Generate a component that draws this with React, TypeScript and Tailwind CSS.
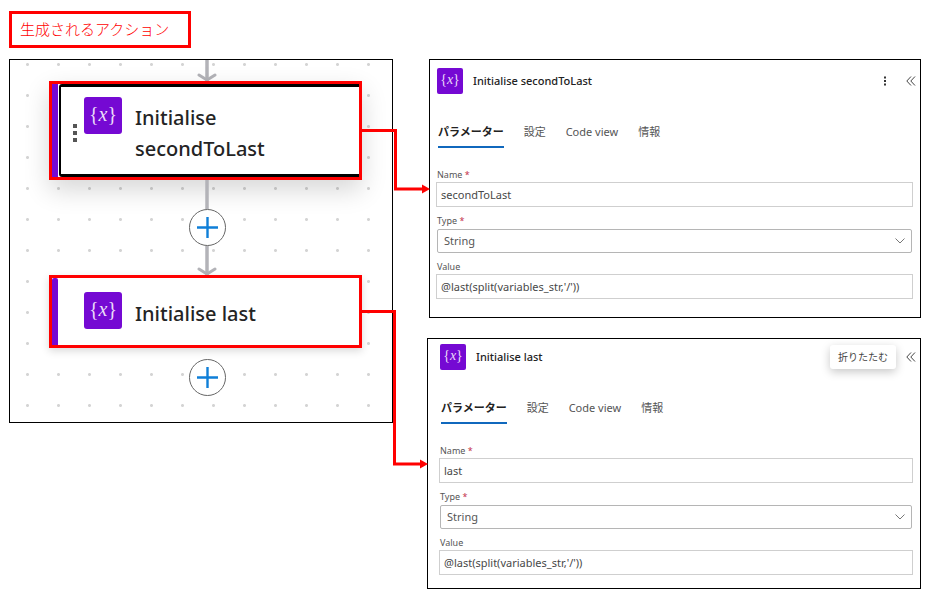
import { useId } from 'react'

interface ActionPanelProps {
  title: string
  name: string
  value: string
  collapseHint?: string
  className: string
}

const tabs = ['パラメーター', '設定', 'Code view', '情報']

function VariableIcon({ large = false }: { large?: boolean }) {
  return (
    <span
      className={`flex shrink-0 items-center justify-center bg-[#7509d3] font-['Liberation_Serif',serif] text-[#eadcf8] ${
        large ? 'h-[37px] w-[38px] rounded-[3px] pb-1 text-[20px] leading-none' : 'size-[26px] rounded-[2px] pb-0.5 text-[14px] leading-none'
      }`}
    >
      {'{'}
      <i>x</i>
      {'}'}
    </span>
  )
}

function Kebab({ className }: { className: string }) {
  return (
    <svg className={className} viewBox="0 0 4 18" fill="currentColor" aria-hidden="true">
      <rect width="4" height="4" />
      <rect y="7" width="4" height="4" />
      <rect y="14" width="4" height="4" />
    </svg>
  )
}

/* Vertical edge between two nodes, with an optional arrow head at its end */
function Edge({ className, height, arrow = false }: { className: string; height: number; arrow?: boolean }) {
  return (
    <svg className={className} viewBox={`0 0 22 ${height}`} fill="none" stroke="#b3b3b8" aria-hidden="true">
      <path d={`M11 0V${height}`} strokeWidth="3.5" />
      {arrow && <path d={`M3 ${height - 6}L11 ${height - 1}L19 ${height - 6}`} strokeWidth="3" strokeLinecap="round" />}
    </svg>
  )
}

function AddButton() {
  return (
    <button type="button" aria-label="Add" className="flex size-[37px] items-center justify-center rounded-full border border-[#666] bg-white">
      <svg className="size-[23px]" viewBox="0 0 23 23" stroke="#0f7fd8" strokeWidth="2.4" aria-hidden="true">
        <path d="M11.5 1V22M1 11.5H22" />
      </svg>
    </button>
  )
}

function FlowCanvas() {
  return (
    <section className="flex flex-col border border-black bg-[radial-gradient(circle,#d4d4d4_1px,transparent_2px)] bg-[length:31px_31px] bg-[position:2px_-11px] pr-[30px] pb-[26px] pl-[39px]">
      <div className="flex justify-center pl-[3px]">
        <Edge className="h-[21px] w-[22px]" height={21} arrow />
      </div>

      <div className="flex border-3 border-[#f00] bg-white shadow-[0_10px_24px_rgba(0,0,0,0.16)]">
        <div className="w-1.5 shrink-0 bg-[#7509d3]" />
        <div className="ml-px flex flex-1 rounded-l-[3px] border-y-3 border-l-2 border-black py-2.5">
          <Kebab className="mt-[27px] ml-3 h-[18px] w-1 text-[#555]" />
          <div className="ml-[7px]">
            <VariableIcon large />
          </div>
          <h2 className="ml-[13px] pt-[5px] text-[20px] leading-[31px] font-medium text-[#242424]">
            Initialise
            <br />
            secondToLast
          </h2>
        </div>
      </div>

      <div className="flex flex-col items-center pl-[3px]">
        <Edge className="h-[29px] w-[22px]" height={29} />
        <AddButton />
        <Edge className="h-[29px] w-[22px]" height={29} arrow />
      </div>

      <div className="flex border-3 border-[#f00] bg-white shadow-[0_3px_8px_rgba(0,0,0,0.15)]">
        <div className="w-1.5 shrink-0 rounded-t-[2px] bg-[#7509d3]" />
        <div className="flex flex-1 items-start pt-3.5 pb-4 pl-[26px]">
          <VariableIcon large />
          <h2 className="ml-[13px] pt-1.5 text-[20px] leading-[31px] font-medium text-[#242424]">Initialise last</h2>
        </div>
      </div>

      <div className="flex justify-center pt-[11px] pl-[3px]">
        <AddButton />
      </div>
    </section>
  )
}

function ActionPanel({ title, name, value, collapseHint, className }: ActionPanelProps) {
  const id = useId()
  const label = 'block pl-px text-[9px] leading-[14px] text-[#555]'
  const input = 'block h-[25px] w-full border border-[#cfcfcf] bg-white px-1 text-[11px] text-[#484848] outline-none'

  return (
    <section className={`border border-black pr-[7px] ${className}`}>
      <header className="flex h-[26px] items-center pl-px">
        <VariableIcon />
        <h2 className="ml-2.5 text-[11px] font-medium text-[#222]">{title}</h2>
        <div className="ml-auto flex items-center">
          {collapseHint ? (
            <span role="tooltip" className="mr-2.5 rounded-[3px] bg-white px-2 py-1 text-[10px] leading-4 text-[#444] shadow-[0_3px_10px_rgba(0,0,0,0.22)]">
              {collapseHint}
            </span>
          ) : (
            <button type="button" aria-label="More" className="mr-5">
              <Kebab className="h-2.5 w-[2px] text-[#333]" />
            </button>
          )}
          <button type="button" aria-label="Collapse" className="-mr-[3px]">
            <svg className="h-2.5 w-2.5" viewBox="0 0 10 10" fill="none" stroke="#444" aria-hidden="true">
              <path d="M5 .5L.8 5L5 9.5M9 .5L4.8 5L9 9.5" />
            </svg>
          </button>
        </div>
      </header>

      <nav className="mt-[29px] flex gap-5 pl-0.5 text-[11px] leading-[18px] text-[#555]">
        {tabs.map((tab, index) => (
          <button
            key={tab}
            type="button"
            className={index === 0 ? 'border-b-2 border-[#1068bd] pb-[5px] font-bold text-[#222]' : 'border-b-2 border-transparent pb-[5px]'}
          >
            {tab}
          </button>
        ))}
      </nav>

      <form className="mt-5 flex flex-col gap-[7px]">
        <div>
          <label htmlFor={`${id}-name`} className={label}>
            Name <span className="text-[#c4314b]">*</span>
          </label>
          <input id={`${id}-name`} className={input} defaultValue={name} />
        </div>
        <div>
          <label htmlFor={`${id}-type`} className={label}>
            Type <span className="text-[#c4314b]">*</span>
          </label>
          <div className="relative px-px pt-px">
            <select
              id={`${id}-type`}
              className="block h-6 w-full appearance-none rounded-[2px] border border-[#b5b5b5] bg-white px-1.5 text-[11px] leading-5 text-[#555] outline-none"
            >
              <option>String</option>
            </select>
            <svg className="pointer-events-none absolute top-2.5 right-2 h-1.5 w-2.5" viewBox="0 0 10 6" fill="none" stroke="#777" aria-hidden="true">
              <path d="M.5 .5L5 5L9.5 .5" />
            </svg>
          </div>
        </div>
        <div>
          <label htmlFor={`${id}-value`} className={label}>
            Value
          </label>
          <input id={`${id}-value`} className={input} defaultValue={value} />
        </div>
      </form>
    </section>
  )
}

export default function App() {
  return (
    <main className="relative min-h-screen bg-white pt-[11px] pr-3.5 pb-3 pl-[9px] font-['Noto_Sans','Noto_Sans_CJK_JP',sans-serif]">
      <h1 className="w-fit border-3 border-[#f00] py-1 pr-[19px] pl-2 text-[15px] leading-[23px] font-light text-[#f00]">生成されるアクション</h1>

      <div className="mt-[11px] flex items-start gap-[34px]">
        <div className="w-96 shrink-0">
          <FlowCanvas />
        </div>
        <div className="flex min-w-0 flex-1 flex-col gap-5">
          <ActionPanel
            className="ml-0.5 pt-2 pb-[18px] pl-1.5"
            title="Initialise secondToLast"
            name="secondToLast"
            value="@last(split(variables_str,'/'))"
          />
          <ActionPanel
            className="pt-[5px] pb-[13px] pl-[11px]"
            title="Initialise last"
            name="last"
            value="@last(split(variables_str,'/'))"
            collapseHint="折りたたむ"
          />
        </div>
      </div>

      {/* Callout arrows from each node to its panel */}
      <svg className="pointer-events-none absolute top-0 left-0 h-[601px] w-[440px]" viewBox="0 0 440 601" fill="none" stroke="#f00" strokeWidth="3" aria-hidden="true">
        <path d="M361 130.5H395.5V189H423" />
        <path d="M361 311.5H394.5V464H421" />
        <path d="M422 184.5L430 189L422 193.5Z" fill="#f00" stroke="none" />
        <path d="M420 459.5L428 464L420 468.5Z" fill="#f00" stroke="none" />
      </svg>
    </main>
  )
}
